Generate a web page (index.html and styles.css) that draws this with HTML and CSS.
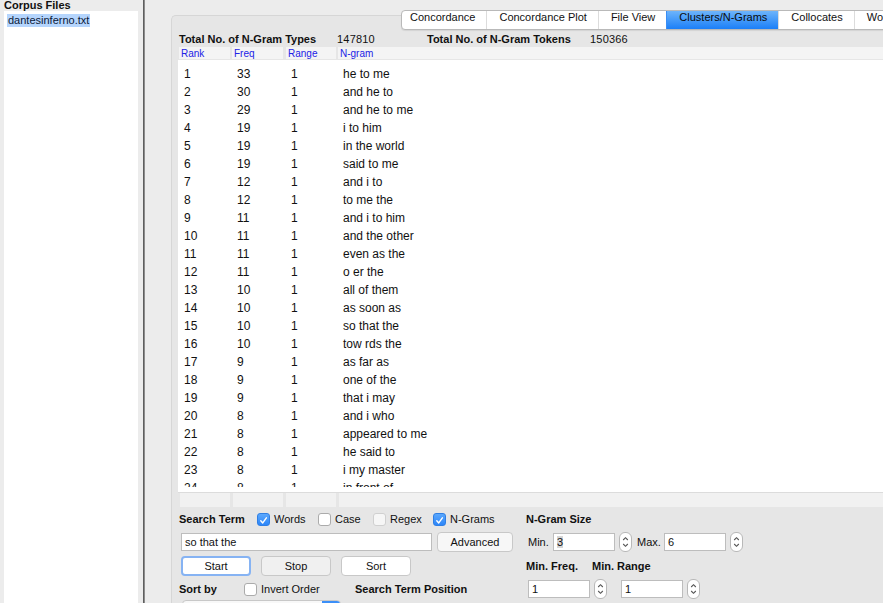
FILE: index.html
```html
<!DOCTYPE html>
<html>
<head>
<meta charset="utf-8">
<link rel="stylesheet" href="styles.css">
</head>
<body>
<div class="app">
  <div class="sidebar">
    <div class="sidebar-title">Corpus Files</div>
    <div class="file-list"><span class="file-item">dantesinferno.txt</span></div>
  </div>
  <div class="divider"></div>
  <div class="main">
    <div class="panel">
      <div class="tabs">
        <div class="tab first">Concordance</div>
        <div class="tab">Concordance Plot</div>
        <div class="tab">File View</div>
        <div class="tab active">Clusters/N-Grams</div>
        <div class="tab">Collocates</div>
        <div class="tab">Word List</div>
      </div>
      <div class="totals">
        <span class="b">Total No. of N-Gram Types</span>
        <span class="num">147810</span>
        <span class="b">Total No. of N-Gram Tokens</span>
        <span class="num">150366</span>
      </div>
      <div class="thead">
        <div class="hc c1">Rank</div>
        <div class="hc c2">Freq</div>
        <div class="hc c3">Range</div>
        <div class="hc c4">N-gram</div>
      </div>
      <div class="tbody">
        <div class="rows">
          <div class="row"><span>1</span><span>33</span><span>1</span><span>he to me</span></div>
          <div class="row"><span>2</span><span>30</span><span>1</span><span>and he to</span></div>
          <div class="row"><span>3</span><span>29</span><span>1</span><span>and he to me</span></div>
          <div class="row"><span>4</span><span>19</span><span>1</span><span>i to him</span></div>
          <div class="row"><span>5</span><span>19</span><span>1</span><span>in the world</span></div>
          <div class="row"><span>6</span><span>19</span><span>1</span><span>said to me</span></div>
          <div class="row"><span>7</span><span>12</span><span>1</span><span>and i to</span></div>
          <div class="row"><span>8</span><span>12</span><span>1</span><span>to me the</span></div>
          <div class="row"><span>9</span><span>11</span><span>1</span><span>and i to him</span></div>
          <div class="row"><span>10</span><span>11</span><span>1</span><span>and the other</span></div>
          <div class="row"><span>11</span><span>11</span><span>1</span><span>even as the</span></div>
          <div class="row"><span>12</span><span>11</span><span>1</span><span>o er the</span></div>
          <div class="row"><span>13</span><span>10</span><span>1</span><span>all of them</span></div>
          <div class="row"><span>14</span><span>10</span><span>1</span><span>as soon as</span></div>
          <div class="row"><span>15</span><span>10</span><span>1</span><span>so that the</span></div>
          <div class="row"><span>16</span><span>10</span><span>1</span><span>tow rds the</span></div>
          <div class="row"><span>17</span><span>9</span><span>1</span><span>as far as</span></div>
          <div class="row"><span>18</span><span>9</span><span>1</span><span>one of the</span></div>
          <div class="row"><span>19</span><span>9</span><span>1</span><span>that i may</span></div>
          <div class="row"><span>20</span><span>8</span><span>1</span><span>and i who</span></div>
          <div class="row"><span>21</span><span>8</span><span>1</span><span>appeared to me</span></div>
          <div class="row"><span>22</span><span>8</span><span>1</span><span>he said to</span></div>
          <div class="row"><span>23</span><span>8</span><span>1</span><span>i my master</span></div>
          <div class="row"><span>24</span><span>8</span><span>1</span><span>in front of</span></div>
        </div>
      </div>
      <div class="tfoot">
        <div class="fc c1"></div>
        <div class="fc c2"></div>
        <div class="fc c3"></div>
        <div class="fc c4"></div>
      </div>
      <div class="controls">
        <div class="col-left">
          <div class="crow ra">
            <span class="b w-search">Search Term</span>
            <span class="grp g-words"><span class="cb on"><svg width="13" height="13" viewBox="0 0 13 13"><path d="M3.3 6.9 L5.6 9.4 L9.9 3.4" stroke="#fff" stroke-width="1.7" fill="none" stroke-linecap="round" stroke-linejoin="round"/></svg></span>Words</span>
            <span class="grp g-case"><span class="cb"></span>Case</span>
            <span class="grp g-regex"><span class="cb dis"></span>Regex</span>
            <span class="grp"><span class="cb on"><svg width="13" height="13" viewBox="0 0 13 13"><path d="M3.3 6.9 L5.6 9.4 L9.9 3.4" stroke="#fff" stroke-width="1.7" fill="none" stroke-linecap="round" stroke-linejoin="round"/></svg></span>N-Grams</span>
          </div>
          <div class="crow rb">
            <div class="input search-input">so that the</div>
            <div class="btn adv">Advanced</div>
          </div>
          <div class="crow rc">
            <div class="btn big focus">Start</div>
            <div class="btn big grey">Stop</div>
            <div class="btn big">Sort</div>
          </div>
          <div class="crow rd">
            <span class="b w-sortby">Sort by</span>
            <span class="grp g-invert"><span class="cb"></span>Invert Order</span>
            <span class="b">Search Term Position</span>
          </div>
          <div class="crow re">
            <div class="dropdown"><div class="dd-arrow"></div></div>
          </div>
        </div>
        <div class="col-right">
          <div class="crow ra"><span class="b">N-Gram Size</span></div>
          <div class="crow rb">
            <span class="lbl-min">Min.</span>
            <div class="input num-input"><span class="sel">3</span></div>
            <svg class="spin" width="13" height="20" viewBox="0 0 13 20"><rect x="0.5" y="0.5" width="12" height="19" rx="5.5" fill="#fff" stroke="#b8b8b8"/><path d="M4.2 8 L6.5 5.7 L8.8 8" fill="none" stroke="#555" stroke-width="1.1"/><path d="M4.2 12 L6.5 14.3 L8.8 12" fill="none" stroke="#555" stroke-width="1.1"/></svg>
            <span class="lbl-max">Max.</span>
            <div class="input num-input">6</div>
            <svg class="spin" width="13" height="20" viewBox="0 0 13 20"><rect x="0.5" y="0.5" width="12" height="19" rx="5.5" fill="#fff" stroke="#b8b8b8"/><path d="M4.2 8 L6.5 5.7 L8.8 8" fill="none" stroke="#555" stroke-width="1.1"/><path d="M4.2 12 L6.5 14.3 L8.8 12" fill="none" stroke="#555" stroke-width="1.1"/></svg>
          </div>
          <div class="crow rc">
            <span class="b w-minfreq">Min. Freq.</span>
            <span class="b">Min. Range</span>
          </div>
          <div class="crow rd">
            <div class="input num-input2">1</div>
            <svg class="spin" width="13" height="20" viewBox="0 0 13 20"><rect x="0.5" y="0.5" width="12" height="19" rx="5.5" fill="#fff" stroke="#b8b8b8"/><path d="M4.2 8 L6.5 5.7 L8.8 8" fill="none" stroke="#555" stroke-width="1.1"/><path d="M4.2 12 L6.5 14.3 L8.8 12" fill="none" stroke="#555" stroke-width="1.1"/></svg>
            <div class="input num-input2 second">1</div>
            <svg class="spin" width="13" height="20" viewBox="0 0 13 20"><rect x="0.5" y="0.5" width="12" height="19" rx="5.5" fill="#fff" stroke="#b8b8b8"/><path d="M4.2 8 L6.5 5.7 L8.8 8" fill="none" stroke="#555" stroke-width="1.1"/><path d="M4.2 12 L6.5 14.3 L8.8 12" fill="none" stroke="#555" stroke-width="1.1"/></svg>
          </div>
        </div>
      </div>
    </div>
  </div>
</div>
</body>
</html>
```

FILE: styles.css
```css
* { box-sizing: border-box; }
html, body {
  margin: 0;
  padding: 0;
}
body {
  width: 883px;
  height: 603px;
  overflow: hidden;
  background: #ececec;
  font-family: "Liberation Sans", Arial, sans-serif;
  font-size: 11px;
  color: #111;
}
.b { font-weight: bold; }

.app {
  display: flex;
  height: 603px;
}

/* sidebar */
.sidebar {
  width: 143px;
  flex: none;
  display: flex;
  flex-direction: column;
  padding-left: 4px;
}
.sidebar-title {
  font-weight: bold;
  height: 11px;
  line-height: 11px;
}
.file-list {
  width: 134px;
  flex: 1;
  background: #fff;
  padding-top: 3px;
  line-height: 13px;
}
.file-item {
  display: inline-block;
  margin-left: 3px;
  padding: 0 1px;
  height: 13px;
  background: #b5d5fd;
  color: #0c1a3a;
}
.divider {
  width: 2px;
  flex: none;
  background: #5e5e5e;
  border-right: 1px solid #8c8c8c;
}

/* main */
.main {
  flex: 1;
  padding: 15px 0 0 26px;
  min-width: 0;
}
.panel {
  position: relative;
  height: 100%;
  background: #e6e6e6;
  border-top: 1px solid #d6d6d6;
  border-left: 1px solid #d6d6d6;
  border-top-left-radius: 5px;
  padding: 15px 0 0 6px;
}

/* tabs */
.tabs {
  position: absolute;
  top: -6px;
  left: 229px;
  height: 20px;
  display: flex;
  background: #fff;
  border: 1px solid #b9b9b9;
  border-radius: 4px 0 0 4px;
  box-shadow: 0 1px 1px rgba(0,0,0,0.08);
  white-space: nowrap;
}
.tab {
  height: 18px;
  line-height: 12px;
  padding: 0 11px 0 12px;
  border-left: 1px solid #dcdcdc;
  color: #111;
}
.tab.first {
  border-left: none;
  padding-left: 8px;
}
.tab.active {
  background: linear-gradient(#6db4fb, #1b7ff8);
  border-left-color: #3a8ef5;
  color: #0b0b0b;
}

/* totals */
.totals {
  height: 16px;
  display: grid;
  grid-template-columns: 158px 90px 163px auto;
  align-items: center;
  padding-left: 1px;
  line-height: 16px;
}
.totals .num { letter-spacing: 0.2px; }

/* header */
.thead {
  height: 12px;
  margin-bottom: 1px;
  display: flex;
  padding-left: 1px;
}
.hc {
  background: #f4f4f4;
  color: #2222e6;
  font-size: 10px;
  line-height: 13px;
  height: 12px;
  overflow: hidden;
  padding-left: 2px;
}
.c1 { width: 51px; margin-right: 2px; }
.c2 { width: 51px; margin-right: 3px; }
.c3 { width: 50px; margin-right: 2px; }
.c4 { flex: 1; }

/* body */
.tbody {
  background: #fff;
  height: 432px;
  padding-bottom: 5px;
}
.rows {
  height: 427px;
  overflow: hidden;
  padding-top: 5px;
}
.row {
  display: grid;
  grid-template-columns: 54px 54px 52px 1fr;
  height: 18px;
  line-height: 18px;
  font-size: 12px;
  color: #111;
}
.row span:nth-child(1) { padding-left: 6px; }
.row span:nth-child(2) { padding-left: 5px; }
.row span:nth-child(3) { padding-left: 5px; }
.row span:nth-child(4) { padding-left: 5px; }

/* footer */
.tfoot {
  height: 16px;
  display: flex;
  padding-left: 2px;
  border-top: 1px solid #dcdcdc;
}
.fc {
  height: 14px;
  background: #f1f1f1;
}
.tfoot .c1 { width: 50px; margin-right: 3px; }
.tfoot .c2 { width: 50px; margin-right: 3px; }
.tfoot .c3 { width: 50px; margin-right: 3px; }

/* controls */
.controls {
  display: flex;
  padding-left: 1px;
}
.col-left {
  width: 347px;
  flex: none;
}
.col-right {
  flex: 1;
}
.crow {
  display: flex;
  align-items: center;
  white-space: nowrap;
}
.ra { height: 22px; }
.rb { height: 24px; }
.rc { height: 24px; }
.rd { height: 22px; }
.re { height: 10px; align-items: flex-start; }

.w-search { width: 78px; }
.grp { display: flex; align-items: center; }
.g-words { width: 61px; }
.g-case { width: 55px; }
.g-regex { width: 60px; }
.g-invert { width: 111px; }
.w-sortby { width: 65px; }

.cb {
  width: 13px;
  height: 13px;
  flex: none;
  margin-right: 4px;
  border: 1px solid #ababab;
  border-radius: 3px;
  background: #fff;
  display: flex;
}
.cb.on {
  background: linear-gradient(#5ba8fd, #2d86f9);
  border-color: #2f7fe4;
}
.cb.dis {
  background: #f6f6f6;
  border-color: #d0d0d0;
}

.input {
  height: 18px;
  background: #fff;
  border: 1px solid #bdbdbd;
  line-height: 16px;
  padding-left: 3px;
}
.search-input {
  width: 251px;
  margin-left: 2px;
}
.btn {
  height: 20px;
  border: 1px solid #c8c8c8;
  border-radius: 4px;
  background: #fff;
  text-align: center;
  line-height: 18px;
}
.adv {
  width: 76px;
  margin-left: 5px;
  background: #f7f7f7;
}
.big {
  width: 70px;
  margin-right: 10px;
}
.big:first-child { margin-left: 2px; }
.focus {
  border: 2px solid #86b3f3;
  line-height: 16px;
}
.grey { background: #f0f0f0; }

.dropdown {
  position: relative;
  margin-left: 3px;
  margin-top: 0;
  width: 159px;
  height: 12px;
  background: #f8f8f8;
  border: 1px solid #c8c8c8;
  border-radius: 4px;
  overflow: hidden;
}
.dd-arrow {
  position: absolute;
  right: 0;
  top: 0;
  width: 18px;
  height: 100%;
  background: #3b8ff8;
}

.lbl-min { width: 25px; margin-left: 2px; }
.lbl-max { width: 27px; margin-left: 5px; }
.num-input { width: 62px; margin-right: 4px; }
.num-input2 { width: 62px; margin-left: 2px; margin-right: 4px; }
.num-input2.second { margin-left: 14px; }
.sel { background: #d6d6d6; }
.spin { flex: none; display: block; }
.w-minfreq { width: 66px; }
```
